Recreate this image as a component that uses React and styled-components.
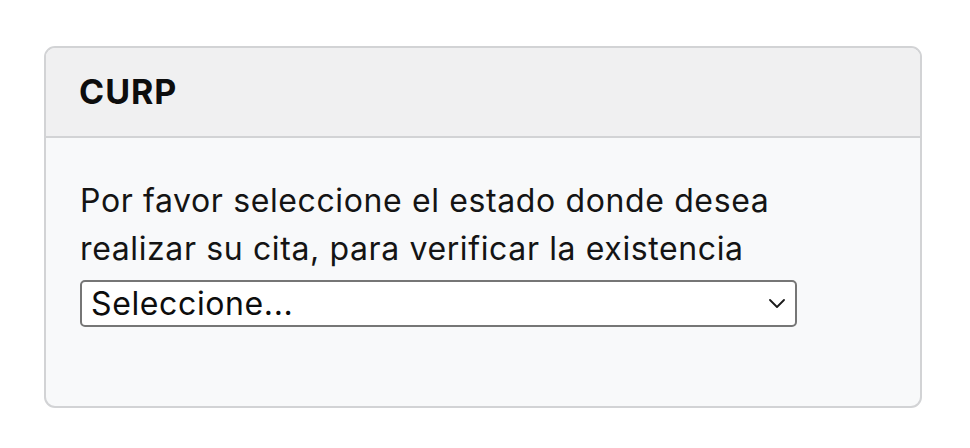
import React from "react";
import styled, { createGlobalStyle } from "styled-components";

const GlobalStyle = createGlobalStyle`
  body {
    margin: 0;
    background: #ffffff;
    font-family: Inter, "Liberation Sans", sans-serif;
    color: #141414;
  }
`;

const Page = styled.div`
  padding: 46px 48px 40px 44px;
`;

const Card = styled.div`
  border: 2px solid #d2d3d5;
  border-radius: 11px;
  background: #f8f9fa;
  overflow: hidden;
`;

const CardHeader = styled.div`
  background: #f0f0f1;
  border-bottom: 2px solid #d2d3d5;
  padding: 24px 34px 24px 33px;
`;

const Title = styled.h5`
  margin: 0;
  font-size: 34px;
  line-height: 40px;
  font-weight: 700;
  letter-spacing: 1px;
  color: #0d0d0d;
`;

const CardBody = styled.div`
  padding: 39px 34px 79px 34px;
`;

const Message = styled.div`
  font-size: 32px;
  line-height: 48px;
  letter-spacing: 0.62px;
  max-width: 780px;
`;

const SelectWrap = styled.div`
  position: relative;
  width: 717px;
  margin-top: 7px;
`;

const Select = styled.select`
  appearance: none;
  -webkit-appearance: none;
  display: block;
  width: 100%;
  height: 47px;
  box-sizing: border-box;
  border: 2px solid #767676;
  border-radius: 5px;
  background: #ffffff;
  padding: 0 40px 0 9px;
  font-family: Inter, "Liberation Sans", sans-serif;
  font-size: 32px;
  letter-spacing: 0.62px;
  color: #0d0d0d;
  outline: none;
`;

const Chevron = styled.svg`
  position: absolute;
  right: 12px;
  top: 19px;
  pointer-events: none;
`;

export default function App() {
  return (
    <>
      <GlobalStyle />
      <Page>
        <Card>
          <CardHeader>
            <Title>CURP</Title>
          </CardHeader>
          <CardBody>
            <Message>
              Por favor seleccione el estado donde desea realizar su cita, para
              verificar la existencia
            </Message>
            <SelectWrap>
              <Select defaultValue="">
                <option value="">Seleccione...</option>
              </Select>
              <Chevron width="16" height="9" viewBox="0 0 16 9">
                <path
                  d="M1 1 L8 8 L15 1"
                  fill="none"
                  stroke="#1a1a1a"
                  strokeWidth="1.8"
                  strokeLinecap="round"
                  strokeLinejoin="round"
                />
              </Chevron>
            </SelectWrap>
          </CardBody>
        </Card>
      </Page>
    </>
  );
}
